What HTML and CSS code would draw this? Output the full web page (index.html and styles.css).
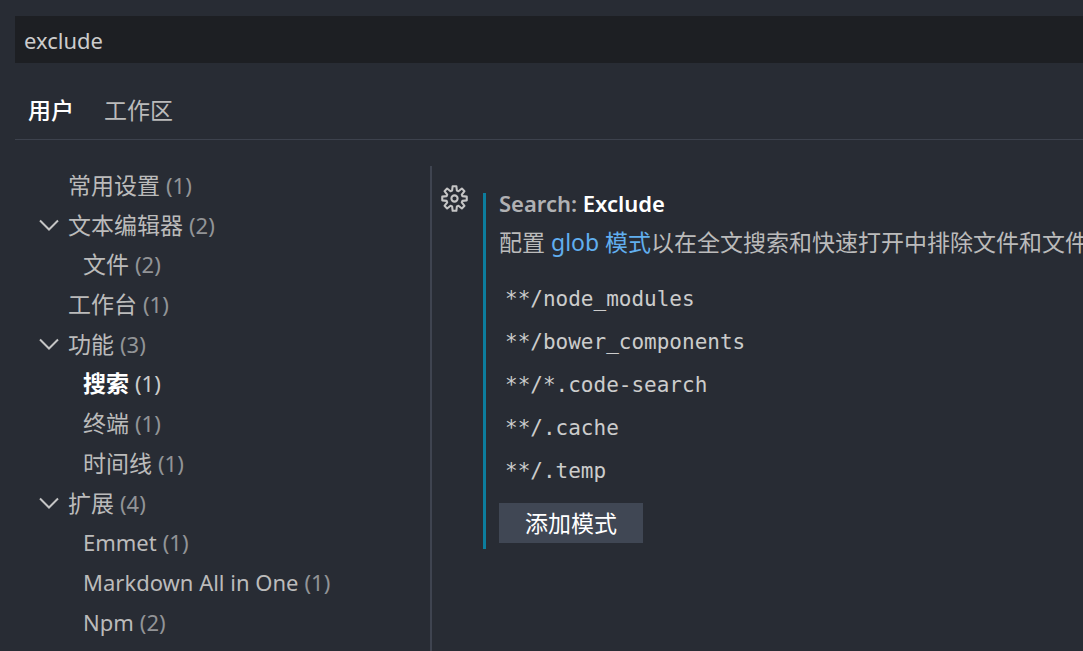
FILE: index.html
```html
<!DOCTYPE html>
<html lang="zh-CN">
<head>
<meta charset="utf-8">
<title>设置</title>
<link rel="stylesheet" href="styles.css">
</head>
<body>
<svg class="symbols" aria-hidden="true">
  <symbol id="chevron" viewBox="0 0 20 12"><path d="M1 1.5 10 10.5 19 1.5"/></symbol>
</svg>
<div class="settings">
  <header class="header">
    <input class="search" type="text" value="exclude" aria-label="搜索设置">
    <nav class="tabs">
      <button class="tab tab-active" type="button">用户</button>
      <button class="tab" type="button">工作区</button>
    </nav>
  </header>
  <div class="body">
    <nav class="toc">
      <ul class="tree">
        <li><button class="row" type="button"><span class="twisty"></span><span class="label">常用设置</span><span class="count">(1)</span></button></li>
        <li>
          <button class="row" type="button"><span class="twisty"><svg class="chevron"><use href="#chevron"/></svg></span><span class="label">文本编辑器</span><span class="count">(2)</span></button>
          <ul class="branch">
            <li><button class="row" type="button"><span class="label">文件</span><span class="count">(2)</span></button></li>
          </ul>
        </li>
        <li><button class="row" type="button"><span class="twisty"></span><span class="label">工作台</span><span class="count">(1)</span></button></li>
        <li>
          <button class="row" type="button"><span class="twisty"><svg class="chevron"><use href="#chevron"/></svg></span><span class="label">功能</span><span class="count">(3)</span></button>
          <ul class="branch">
            <li><button class="row row-selected" type="button"><span class="label">搜索</span><span class="count">(1)</span></button></li>
            <li><button class="row" type="button"><span class="label">终端</span><span class="count">(1)</span></button></li>
            <li><button class="row" type="button"><span class="label">时间线</span><span class="count">(1)</span></button></li>
          </ul>
        </li>
        <li>
          <button class="row" type="button"><span class="twisty"><svg class="chevron"><use href="#chevron"/></svg></span><span class="label">扩展</span><span class="count">(4)</span></button>
          <ul class="branch">
            <li><button class="row" type="button"><span class="label label-latin">Emmet</span><span class="count">(1)</span></button></li>
            <li><button class="row" type="button"><span class="label label-latin">Markdown All in One</span><span class="count">(1)</span></button></li>
            <li><button class="row" type="button"><span class="label label-latin">Npm</span><span class="count">(2)</span></button></li>
          </ul>
        </li>
      </ul>
    </nav>
    <main class="content">
      <button class="gear" type="button" aria-label="更多操作">
        <svg class="gear-icon" viewBox="0 0 26 26"><path d="M10.7 5.4 11.2 1.2H14.8L15.3 5.4 16.8 6 20.1 3.4 22.6 5.9 20 9.2 20.6 10.7 24.8 11.2V14.8L20.6 15.3 20 16.8 22.6 20.1 20.1 22.6 16.8 20 15.3 20.6 14.8 24.8H11.2L10.7 20.6 9.2 20 5.9 22.6 3.4 20.1 6 16.8 5.4 15.3 1.2 14.8V11.2L5.4 10.7 6 9.2 3.4 5.9 5.9 3.4 9.2 6Z"/><circle cx="13" cy="13" r="3"/></svg>
      </button>
      <section class="setting">
        <h2 class="title"><span class="category">Search:</span> Exclude</h2>
        <p class="description">配置 <a class="link" href="#">glob 模式</a>以在全文搜索和快速打开中排除文件和文件夹。</p>
        <ul class="patterns">
          <li>**/node_modules</li>
          <li>**/bower_components</li>
          <li>**/*.code-search</li>
          <li>**/.cache</li>
          <li>**/.temp</li>
        </ul>
        <button class="add" type="button">添加模式</button>
      </section>
    </main>
  </div>
</div>
</body>
</html>
```
FILE: styles.css
```css
* {
  box-sizing: border-box;
}

body {
  margin: 0;
  background: #282c34;
  color: #bbbbbb;
  font-family: "Noto Sans", "Noto Sans CJK SC", sans-serif;
  font-size: 22px;
  overflow: hidden;
}

button,
input {
  font: inherit;
  color: inherit;
  border: 0;
  padding: 0;
  background: none;
}

ul {
  margin: 0;
  padding: 0;
  list-style: none;
}

.symbols {
  display: none;
}

.settings {
  display: flex;
  flex-direction: column;
  min-height: 100vh;
  padding: 16px 0 0 15px;
}

.search {
  display: block;
  width: 100%;
  height: 47px;
  padding: 0 9px;
  background: #1d1f23;
  color: #cccccc;
  outline: 0;
}

.tabs {
  display: flex;
  gap: 30px;
  padding: 23px 13px 5px;
  border-bottom: 1px solid #3d424d;
  font-size: 23px;
}

.tab {
  line-height: 48px;
}

.tab-active {
  color: #ffffff;
  font-weight: 500;
}

.body {
  display: flex;
  flex: 1;
  padding-top: 26px;
}

.toc {
  flex: 0 0 417px;
  padding-left: 24px;
  border-right: 2px solid #3f4450;
}

.tree,
.branch {
  display: grid;
  gap: 1px;
}

.branch {
  padding: 1px 0 0 44px;
}

.row {
  display: flex;
  align-items: center;
  gap: 6px;
  width: 100%;
  height: 39px;
  line-height: 39px;
  text-align: left;
  white-space: nowrap;
}

.tree > li > .branch {
  padding-top: 0;
}

.label {
  font-size: 23px;
}

.label-latin {
  font-size: 22px;
}

.count {
  color: #929497;
}

.row-selected .label {
  color: #ffffff;
  font-weight: 700;
}

.row-selected .count {
  color: #cccccc;
}

.twisty {
  flex: 0 0 23px;
  display: flex;
  padding-bottom: 2px;
}

.chevron {
  width: 20px;
  height: 12px;
  fill: none;
  stroke: #c5c5c5;
  stroke-width: 2;
}

.content {
  flex: 1;
  display: flex;
  align-items: flex-start;
  gap: 15px;
  min-width: 0;
  padding-left: 9px;
}

.gear {
  flex: 0 0 27px;
  padding-top: 19px;
}

.gear-icon {
  display: block;
  width: 27px;
  height: 27px;
  fill: none;
  stroke: #c5c5c5;
  stroke-width: 2;
  stroke-linejoin: round;
}

.setting {
  flex: 1;
  min-width: 0;
  margin-top: 27px;
  padding: 0 0 6px 13px;
  border-left: 3px solid #0c7d9d;
}

.title {
  margin: 0;
  color: #ffffff;
  font-size: 22px;
  font-weight: 600;
  line-height: 20px;
}

.category {
  color: #b0b1b3;
}

.description {
  margin: 9px 0 16px;
  font-size: 23px;
  line-height: 40px;
  white-space: nowrap;
}

.link {
  color: #61afef;
  text-decoration: none;
}

.patterns {
  padding-left: 6px;
  color: #cccccc;
  font-family: "DejaVu Sans Mono", monospace;
  font-size: 21px;
  line-height: 43px;
}

.add {
  display: block;
  margin-top: 10px;
  padding: 0 26px;
  background: #404754;
  color: #ffffff;
  font-size: 23px;
  line-height: 40px;
}
```
